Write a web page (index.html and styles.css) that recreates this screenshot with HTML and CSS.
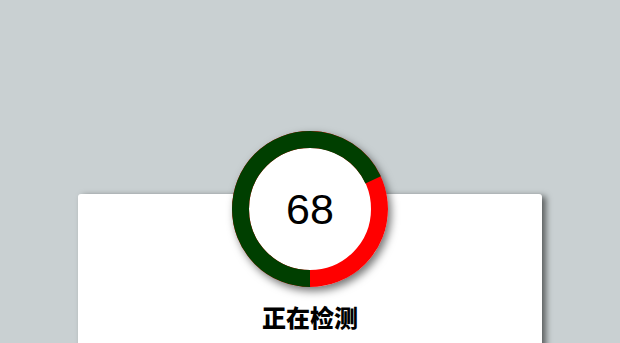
FILE: index.html
```html
<!DOCTYPE html>
<html lang="zh-CN">
<head>
    <meta charset="UTF-8">
    <meta name="viewport" content="width=device-width, initial-scale=1.0">
    <title>正在检测</title>
    <link rel="stylesheet" href="styles.css">
</head>
<body>

<div class="check-card">
    <div class="score-ring">
        <svg class="ring" viewBox="0 0 156 156" width="156" height="156">
            <circle cx="78" cy="78" r="69.5" fill="#fff" stroke="#ff0000" stroke-width="17"/>
            <circle cx="78" cy="78" r="69.5" fill="none" stroke="#003f00" stroke-width="17"
                    stroke-dasharray="296.94 436.68" transform="rotate(90 78 78)"/>
        </svg>
        <span class="score">68</span>
    </div>
    <p class="status">正在检测</p>
</div>

</body>
</html>
```

FILE: styles.css
```css
html, body {
    margin: 0;
    padding: 0;
}
body {
    background-color: #c9d0d2;
    font-family: "Liberation Sans", Arial, sans-serif;
    height: 343px;
    overflow: hidden;
}
.check-card {
    width: 464px;
    height: 200px;
    margin: 194px 0 0 78px;
    background-color: #fff;
    border-radius: 3px;
    box-shadow: 4px 2px 6px rgba(0, 0, 0, 0.55);
    display: flex;
    flex-direction: column;
    align-items: center;
}
.score-ring {
    position: relative;
    width: 156px;
    height: 156px;
    margin-top: -63px;
    border-radius: 50%;
    box-shadow: 3px 4px 8px rgba(0, 0, 0, 0.55);
}
.ring {
    display: block;
}
.score {
    position: absolute;
    left: 0;
    right: 0;
    top: 0;
    bottom: 0;
    display: flex;
    align-items: center;
    justify-content: center;
    font-size: 43px;
    color: #000;
}
.status {
    margin: 14px 0 0;
    font-family: "Noto Sans CJK SC", sans-serif;
    font-weight: 900;
    font-size: 24px;
    line-height: 32px;
    color: #000;
}
```
